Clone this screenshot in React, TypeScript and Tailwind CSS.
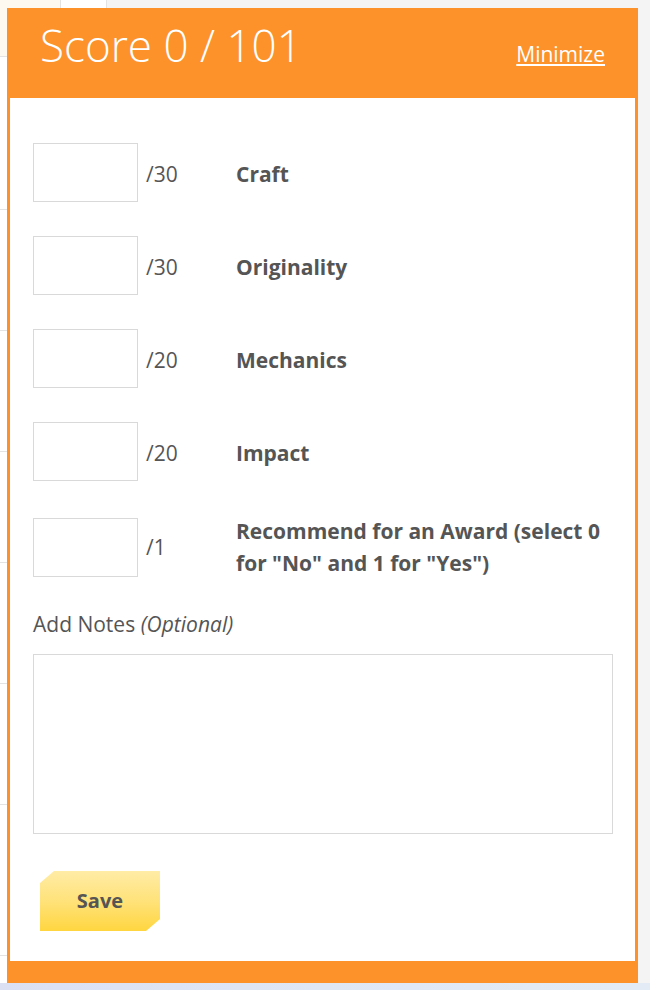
import React from "react";

const criteria = [
  { max: 30, label: "Craft" },
  { max: 30, label: "Originality" },
  { max: 20, label: "Mechanics" },
  { max: 20, label: "Impact" },
  { max: 1, label: 'Recommend for an Award (select 0 for "No" and 1 for "Yes")', long: true },
];

function Sidebar() {
  return (
    <div className="flex w-[107px] flex-col bg-white">
      <div className="flex h-[57px] border-b border-[#e3e3e3]">
        <div className="w-[61px] border-r border-[#e3e3e3] bg-[#fdf9f0]" />
        <div className="flex-1 border-r border-[#e3e3e3]" />
      </div>
      <div className="h-[153px] border-b border-[#e3e3e3]" />
      <div className="h-[121px] border-b border-[#e3e3e3]" />
      <div className="h-[121px] border-b border-[#e3e3e3]" />
      <div className="h-[111px] border-b border-[#e3e3e3]" />
      <div className="h-[121px] border-b border-[#e3e3e3]" />
      <div className="h-[121px] border-b border-[#e3e3e3]" />
      <div className="h-[151px] border-b border-[#e3e3e3]" />
    </div>
  );
}

function ScorePanel() {
  return (
    <div className="absolute left-[7px] top-[8px] flex h-[975px] w-[631px] flex-col bg-[#fd922b] px-[3px] pb-[22px]">
      <div className="flex h-[90px] items-baseline justify-between pl-[30px] pr-[30px] pt-[6px]">
        <h1 className="text-[44px] font-light leading-[62px] text-white">Score 0 / 101</h1>
        <a href="#" className="text-[21px] text-white underline underline-offset-2">
          Minimize
        </a>
      </div>

      <div className="flex flex-1 flex-col bg-white pl-[23px] pr-[22px] pt-[45px] text-[#555]">
        <div className="flex flex-col gap-[34px]">
          {criteria.map((c) => (
            <div key={c.label} className="flex items-center">
              <input
                type="text"
                className="h-[59px] w-[105px] shrink-0 border border-[#d9d9d9] bg-white outline-none"
              />
              <span className={c.long ? "ml-2 w-[90px] shrink-0 text-[21px] leading-[32px]" : "ml-2 w-[90px] shrink-0 pt-[3px] text-[21px] leading-[32px]"}>
                /{c.max}
              </span>
              <span className={c.long ? "flex-1 text-[21px] font-bold leading-[32px]" : "flex-1 pt-[3px] text-[21px] font-bold leading-[32px]"}>
                {c.label}
              </span>
            </div>
          ))}
        </div>

        <label className="mt-[29px] text-[21px] leading-[32px]">
          Add Notes <em>(Optional)</em>
        </label>
        <textarea className="mt-[14px] h-[180px] w-full resize-none border border-[#d9d9d9] outline-none" />

        <button className="ml-[7px] mt-[37px] h-[60px] w-[120px] bg-[linear-gradient(180deg,#ffeca6_0%,#ffe27a_50%,#ffd640_100%)] text-[20px] font-bold text-[#555] [clip-path:polygon(14px_0,100%_0,100%_calc(100%_-_12px),calc(100%_-_14px)_100%,0_100%,0_12px)]">
          Save
        </button>
      </div>
    </div>
  );
}

export default function App() {
  return (
    <div className="relative h-[990px] w-[650px] overflow-hidden bg-[#f4f4f4] font-['Open_Sans',sans-serif]">
      <div className="flex h-[983px]">
        <Sidebar />
        <div className="flex-1 bg-[#f4f4f4]" />
      </div>
      <div className="h-[7px] bg-[linear-gradient(90deg,#dbe1f3,#e3ecf6)]" />
      <ScorePanel />
    </div>
  );
}
